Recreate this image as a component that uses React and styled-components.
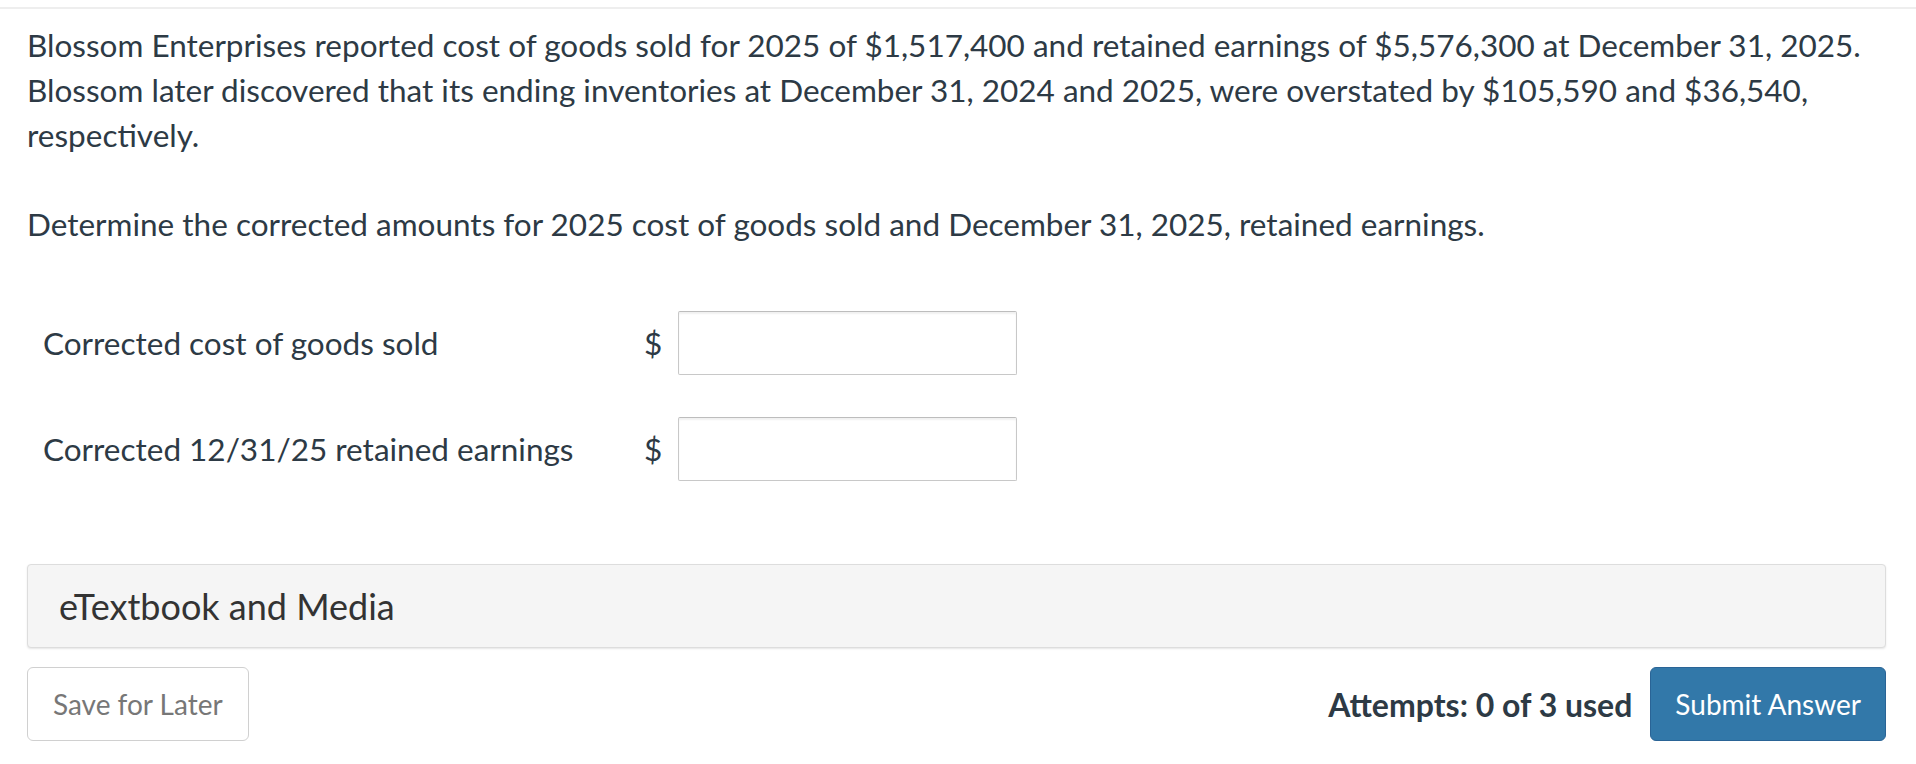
import React from "react";
import styled, { createGlobalStyle } from "styled-components";

const Global = createGlobalStyle`
  html, body { margin: 0; padding: 0; background: #fff; }
  body { font-family: Lato, "Noto Sans", sans-serif; color: #2d3a45; }
`;

const Page = styled.div`
  margin-top: 7px;
  border-top: 2px solid #eeeeee;
  padding: 14px 30px 24px 27px;
`;

const Para = styled.p`
  margin: 0 0 ${(p) => p.$gap || 0}px 0;
  font-size: 31.5px;
  line-height: 45px;
  color: #2d3a45;
`;

const Rows = styled.div`
  display: flex;
  flex-direction: column;
  gap: 42px;
  margin-top: 64px;
  padding-left: 16px;
`;

const Row = styled.div`
  display: flex;
  align-items: center;
`;

const Label = styled.div`
  width: 601px;
  font-size: 31.5px;
  color: #2d3a45;
`;

const Dollar = styled.span`
  width: 34px;
  font-size: 31.5px;
  color: #2d3a45;
`;

const Input = styled.input`
  box-sizing: border-box;
  width: 339px;
  height: 64px;
  border: 1px solid #c8c8c8;
  border-top-color: #bdbdbd;
  border-radius: 2px;
  box-shadow: inset 0 2px 2px rgba(0, 0, 0, 0.06);
  font-size: 26px;
  padding: 0 12px;
  font-family: inherit;
  outline: none;
`;

const MediaBox = styled.div`
  margin-top: 83px;
  box-sizing: border-box;
  height: 84px;
  display: flex;
  align-items: center;
  padding-left: 31px;
  background: #f5f5f5;
  border: 1px solid #dddddd;
  border-radius: 4px;
  box-shadow: 0 1px 2px rgba(0, 0, 0, 0.1);
  font-size: 36px;
  color: #333;
`;

const Footer = styled.div`
  margin-top: 19px;
  display: flex;
  align-items: center;
`;

const Button = styled.button`
  box-sizing: border-box;
  height: 74px;
  padding: 0 ${(p) => (p.$primary ? 24 : 25)}px;
  font-family: Lato, "Noto Sans", sans-serif;
  font-size: 28px;
  border-radius: 6px;
  border: 1px solid ${(p) => (p.$primary ? "#2a6496" : "#d0d0d0")};
  background: ${(p) => (p.$primary ? "#3278a9" : "#fff")};
  color: ${(p) => (p.$primary ? "#fff" : "#777")};
  cursor: pointer;
`;

const Spacer = styled.div`
  flex: 1;
`;

const Attempts = styled.span`
  font-size: 32px;
  font-weight: 700;
  color: #2d3a45;
  margin-right: 18px;
`;

export default function App() {
  return (
    <>
      <Global />
      <Page>
        <Para $gap={44}>
          Blossom Enterprises reported cost of goods sold for 2025 of $1,517,400 and retained earnings of $5,576,300 at December 31, 2025.
          <br />
          Blossom later discovered that its ending inventories at December 31, 2024 and 2025, were overstated by $105,590 and $36,540,
          <br />
          respectively.
        </Para>
        <Para>
          Determine the corrected amounts for 2025 cost of goods sold and December 31, 2025, retained earnings.
        </Para>
        <Rows>
          <Row>
            <Label>Corrected cost of goods sold</Label>
            <Dollar>$</Dollar>
            <Input type="text" />
          </Row>
          <Row>
            <Label>Corrected 12/31/25 retained earnings</Label>
            <Dollar>$</Dollar>
            <Input type="text" />
          </Row>
        </Rows>
        <MediaBox>eTextbook and Media</MediaBox>
        <Footer>
          <Button>Save for Later</Button>
          <Spacer />
          <Attempts>Attempts: 0 of 3 used</Attempts>
          <Button $primary>Submit Answer</Button>
        </Footer>
      </Page>
    </>
  );
}
